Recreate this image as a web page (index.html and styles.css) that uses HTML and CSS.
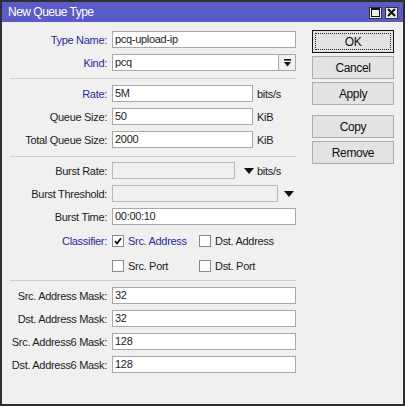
FILE: index.html
```html
<!DOCTYPE html>
<html>
<head>
<meta charset="utf-8">
<link rel="stylesheet" href="styles.css">
</head>
<body>
<div class="win">
  <div class="titlebar">
    <span class="title">New Queue Type</span>
    <div class="tbtns">
      <span class="tbtn"><svg width="9" height="9" viewBox="0 0 9 9"><rect x="0.5" y="0.5" width="8" height="8" fill="none" stroke="#111" stroke-width="1"/><rect x="0" y="0" width="9" height="2" fill="#111"/></svg></span>
      <span class="tbtn"><svg width="9" height="9" viewBox="0 0 9 9"><path d="M1 1 L8 8 M8 1 L1 8" stroke="#111" stroke-width="2" fill="none"/></svg></span>
    </div>
  </div>
  <div class="body">
    <div class="form">
      <div class="row"><span class="lbl blue">Type Name:</span><div class="ctl"><div class="field w-full">pcq-upload-ip</div></div></div>
      <div class="row"><span class="lbl blue">Kind:</span><div class="ctl"><div class="field w-kind">pcq</div><div class="ddbtn"><svg width="7" height="8" viewBox="0 0 7 8"><rect x="0" y="0" width="7" height="1.6" fill="#111"/><polygon points="0,3 7,3 3.5,7.5" fill="#111"/></svg></div></div></div>
      <div class="sep sep1"></div>
      <div class="row"><span class="lbl blue">Rate:</span><div class="ctl"><div class="field w-unit">5M</div><span class="unit">bits/s</span></div></div>
      <div class="row"><span class="lbl">Queue Size:</span><div class="ctl"><div class="field w-unit">50</div><span class="unit">KiB</span></div></div>
      <div class="row"><span class="lbl">Total Queue Size:</span><div class="ctl"><div class="field w-unit">2000</div><span class="unit">KiB</span></div></div>
      <div class="sep sep2"></div>
      <div class="row"><span class="lbl">Burst Rate:</span><div class="ctl"><div class="field dis w-br"></div><span class="arrow a-br"><svg width="10" height="6" viewBox="0 0 10 6"><polygon points="0,0 10,0 5,6" fill="#111"/></svg></span><span class="unit-br">bits/s</span></div></div>
      <div class="row"><span class="lbl">Burst Threshold:</span><div class="ctl"><div class="field dis w-bt"></div><span class="arrow a-bt"><svg width="10" height="6" viewBox="0 0 10 6"><polygon points="0,0 10,0 5,6" fill="#111"/></svg></span></div></div>
      <div class="row"><span class="lbl">Burst Time:</span><div class="ctl"><div class="field w-full">00:00:10</div></div></div>
      <div class="row crow"><span class="lbl blue">Classifier:</span><div class="ctl">
        <span class="chk-item c1"><span class="cb"><svg width="8" height="8" viewBox="0 0 8 8"><path d="M1 4 L3 6.5 L7 1.2" stroke="#111" stroke-width="1.8" fill="none"/></svg></span><span class="blue ctext">Src. Address</span></span>
        <span class="chk-item"><span class="cb"></span><span class="ctext">Dst. Address</span></span>
      </div></div>
      <div class="row crow"><span class="lbl"></span><div class="ctl">
        <span class="chk-item c1"><span class="cb"></span><span class="ctext">Src. Port</span></span>
        <span class="chk-item"><span class="cb"></span><span class="ctext">Dst. Port</span></span>
      </div></div>
      <div class="sep sep3"></div>
      <div class="row"><span class="lbl">Src. Address Mask:</span><div class="ctl"><div class="field w-full">32</div></div></div>
      <div class="row"><span class="lbl">Dst. Address Mask:</span><div class="ctl"><div class="field w-full">32</div></div></div>
      <div class="row"><span class="lbl">Src. Address6 Mask:</span><div class="ctl"><div class="field w-full">128</div></div></div>
      <div class="row"><span class="lbl">Dst. Address6 Mask:</span><div class="ctl"><div class="field w-full">128</div></div></div>
    </div>
    <div class="buttons">
      <div class="btn ok">OK</div>
      <div class="btn">Cancel</div>
      <div class="btn">Apply</div>
      <div class="btn gap">Copy</div>
      <div class="btn">Remove</div>
    </div>
  </div>
</div>
</body>
</html>
```

FILE: styles.css
```css
html, body {
  margin: 0;
  padding: 0;
  background: #f0f0f0;
}
body {
  font-family: "Liberation Sans", Arial, sans-serif;
  font-size: 11px;
  letter-spacing: -0.3px;
  color: #1c1c1c;
}
.win {
  width: 405px;
  height: 406px;
  box-sizing: border-box;
  border: 2px solid #2e2e2e;
  background: #f0f0f0;
  display: flex;
  flex-direction: column;
}
.titlebar {
  height: 20px;
  background: #5b5bc7;
  display: flex;
  align-items: center;
  justify-content: space-between;
  padding: 0 5px 0 5px;
  flex: none;
}
.title {
  color: #fff;
  font-size: 12px;
  letter-spacing: -0.5px;
  padding-left: 1px;
}
.tbtns {
  display: flex;
  gap: 3px;
  margin-top: 1px;
}
.tbtn {
  width: 13px;
  height: 12px;
  box-sizing: border-box;
  background: #ececec;
  border: 1px solid #333;
  display: flex;
  align-items: center;
  justify-content: center;
}
.body {
  display: flex;
  padding-top: 9px;
  column-gap: 16px;
}
.form {
  width: 294px;
  display: flex;
  flex-direction: column;
  gap: 6px;
}
.row {
  display: grid;
  grid-template-columns: 105px 1fr;
  column-gap: 5px;
  height: 17px;
  align-items: center;
}
.crow {
  height: 19px;
}
.lbl {
  text-align: right;
  white-space: nowrap;
}
.blue {
  color: #2a2a98;
}
.ctl {
  display: flex;
  align-items: center;
  height: 100%;
}
.field {
  height: 17px;
  box-sizing: border-box;
  border: 1px solid #a8a8a8;
  background: #fff;
  padding-left: 2px;
  line-height: 15px;
  white-space: nowrap;
  overflow: hidden;
}
.field.dis {
  background: #f0f0f0;
  border-color: #b9b9b9;
}
.w-full { width: 184px; }
.w-kind { width: 167px; }
.w-unit { width: 141px; }
.w-br { width: 123px; }
.w-bt { width: 166px; }
.ddbtn {
  width: 17px;
  height: 17px;
  box-sizing: border-box;
  border: 1px solid #a8a8a8;
  border-left: none;
  background: #f0f0f0;
  display: flex;
  align-items: center;
  justify-content: center;
}
.unit {
  margin-left: 4px;
}
.unit-br {
  margin-left: 3px;
}
.arrow {
  display: flex;
  align-items: center;
}
.a-br {
  margin-left: 9px;
}
.a-bt {
  margin-left: 6px;
}
.sep {
  height: 1px;
  background: #cdcdcd;
  margin-left: 8px;
  width: 286px;
}
.sep1 { margin-top: 1px; }
.sep2 { margin-top: 2px; margin-bottom: -1px; }
.sep3 { margin-top: -1px; }
.chk-item {
  display: flex;
  align-items: center;
}
.chk-item.c1 {
  width: 87px;
}
.cb {
  width: 12px;
  height: 12px;
  box-sizing: border-box;
  border: 1px solid #8a8a8a;
  background: #fff;
  display: flex;
  align-items: center;
  justify-content: center;
  flex: none;
}
.ctext {
  margin-left: 4px;
  white-space: nowrap;
}
.buttons {
  display: flex;
  flex-direction: column;
  gap: 3px;
  margin-top: -1px;
}
.btn {
  width: 82px;
  height: 23px;
  box-sizing: border-box;
  border: 1px solid #adadad;
  background: #e3e3e3;
  display: flex;
  align-items: center;
  justify-content: center;
  font-size: 12px;
  letter-spacing: -0.4px;
  color: #111;
  position: relative;
}
.btn.ok {
  border-color: #111;
}
.btn.ok::after {
  content: "";
  position: absolute;
  left: 2px;
  top: 2px;
  right: 2px;
  bottom: 2px;
  border: 1px dotted #222;
}
.btn.gap {
  margin-top: 7px;
}
```
